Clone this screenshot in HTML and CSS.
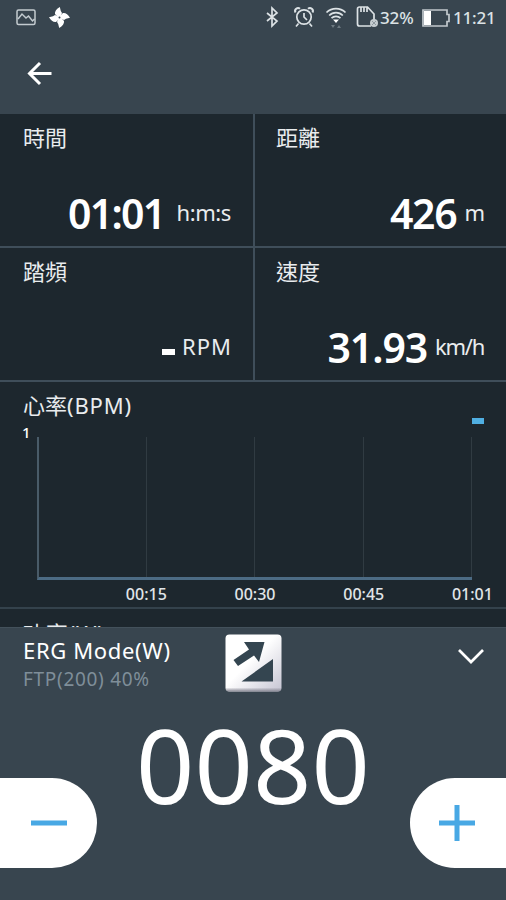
FILE: index.html
```
<!DOCTYPE html>
<html lang="zh-Hant">
<head>
<meta charset="utf-8">
<title>ERG Mode</title>
<link rel="stylesheet" href="styles.css">
</head>
<body>
<main class="screen">
  <header class="statusbar">
    <svg class="notifications" width="56" height="24" viewBox="0 0 56 24">
      <g fill="none" stroke="#c3cbd0" stroke-width="1.500">
        <rect x="1" y="4" width="18" height="14.500" rx="1.500"/>
        <path d="M2 13l4-5 4 4 2.500-2 4 5 2-2"/>
      </g>
      <g fill="#fff" transform="translate(43.500 11.500)">
        <path id="blade" d="M-1.200 0L-4.500-3.500C-5-6-3-8.500 .3-10.500L1.300-6.500L2.500-4.500L1-1Z"/>
        <use href="#blade" transform="rotate(90)"/>
        <use href="#blade" transform="rotate(180)"/>
        <use href="#blade" transform="rotate(270)"/>
        <circle r="1" fill="#38454f"/>
      </g>
    </svg>
    <div class="system">
      <svg width="114" height="26" viewBox="0 0 114 26" fill="none" stroke="#dce2e5" stroke-width="1.700">
        <path d="M2 10l10 8-5 5V5l5 5-10 8"/>
        <g transform="translate(39 14)">
          <circle r="7.200"/><path d="M0-4V0L3 3M-5.500 6.500l-2.500 3M5.500 6.500l2.500 3"/>
          <path d="M-8.500-4.500A3 3 0 0 1-4-8.300M8.500-4.500A3 3 0 0 0 4-8.300" stroke-width="2"/>
        </g>
        <g transform="translate(71 18)">
          <path d="M-9.500-8.500a13.500 13.500 0 0 1 19 0M-6.800-5.500a9.500 9.500 0 0 1 13.600 0M-4.500-2.800a6.300 6.300 0 0 1 9 0"/>
          <path d="M-3-1.500h6L0 2z" fill="#fff" stroke="none"/>
          <path d="M-5 4h4l-2 3zM1 7h4l-2-3z" fill="#6d7981" stroke="none"/>
        </g>
        <path d="M106 23H94.500q-2 0-2-2V6q0-2 2-2h8l6.500 7v6M96 4v5M99 4v5M102 4v5"/>
        <circle cx="109" cy="20" r="4" fill="#c5ccd0" stroke="none"/>
        <path d="M107 18l4 4m0-4l-4 4" stroke="#75818a" stroke-width=".7"/>
      </svg>
      <span class="percent">32%</span>
      <svg class="battery" width="28" height="18" viewBox="0 0 28 18">
        <path d="M1 1h24v4.500h2v7h-2V17H1z" fill="none" stroke="#c1c8cd" stroke-width="1.700"/>
        <path d="M2 2h7v14H2z" fill="#fff"/>
      </svg>
      <span class="clock">11:21</span>
    </div>
  </header>
  <nav class="toolbar">
    <svg width="26" height="26" viewBox="0 0 26 26" fill="none" stroke="#fff" stroke-width="3"><path d="M25.500 12.500H4M14 2L3.500 12.500 14 23"/></svg>
  </nav>
  <section class="metrics">
    <article class="metric"><h2>時間</h2><p><b class="time">01:01</b><span class="hms">h:m:s</span></p></article>
    <article class="metric"><h2>距離</h2><p><b>426</b><span>m</span></p></article>
    <article class="metric"><h2>踏頻</h2><p><i class="dash"></i><span class="rpm">RPM</span></p></article>
    <article class="metric"><h2>速度</h2><p><b class="speed">31.93</b><span class="kmh">km/h</span></p></article>
  </section>
  <section class="heart">
    <div class="heart-head"><h2>心率<span>(BPM)</span></h2><i class="heart-value"></i></div>
    <div class="ymax">1</div>
    <div class="plot"><i></i><i></i><i></i><i></i></div>
    <div class="ticks"><span>00:15</span><span>00:30</span><span>00:45</span><span>01:01</span></div>
  </section>
  <section class="power"><h2>功率(W)</h2></section>
  <section class="sheet">
    <div class="sheet-head">
      <div class="mode"><div class="mode-name">ERG Mode(W)</div><div class="ftp">FTP(200) 40%</div></div>
      <svg class="slope" width="58" height="60" viewBox="0 0 58 60">
        <defs>
          <linearGradient id="face" x1="0" y1="0" x2="1" y2="1"><stop offset=".45" stop-color="#fff"/><stop offset="1" stop-color="#c5c4d2"/></linearGradient>
          <linearGradient id="edge" x1="0" y1="0" x2="0" y2="1"><stop offset=".93" stop-color="#888894" stop-opacity="0"/><stop offset="1" stop-color="#888894"/></linearGradient>
        </defs>
        <rect x="1.500" y="1.500" width="56" height="57" rx="4" fill="url(#face)"/>
        <rect x="1.500" y="1.500" width="56" height="57" rx="4" fill="url(#edge)"/>
        <path d="M20 9h20.500L35 29l-5-6.500-16 10.500-4.500-6L25 16.500zM17.500 48.500l31.500-22.500v22.500z" fill="#344550"/>
      </svg>
      <svg class="chevron" width="28" height="18" viewBox="0 0 28 18" fill="none" stroke="#fff" stroke-width="2.700"><path d="M2 2l12 12L26 2"/></svg>
    </div>
    <div class="watts">0080</div>
    <div class="controls">
      <button class="minus" aria-label="minus"><svg width="38" height="38" viewBox="0 0 38 38" stroke="#48a8e4" stroke-width="5"><path d="M1 19h36"/></svg></button>
      <button class="plus" aria-label="plus"><svg width="38" height="38" viewBox="0 0 38 38" stroke="#48a8e4" stroke-width="5"><path d="M1 19h36M19 1v36"/></svg></button>
    </div>
  </section>
</main>
</body>
</html>
```
FILE: styles.css
```
* { box-sizing: border-box; }
body { margin: 0; font-family: "Noto Sans", "Noto Sans CJK TC", sans-serif; color: #fff; background: #1d272e; }
h2, p { margin: 0; }
.screen { width: 506px; height: 900px; display: flex; flex-direction: column; overflow: hidden; background: #1d272e; }
.statusbar { flex: 0 0 36px; display: flex; justify-content: space-between; padding: 0 10px 0 16px; background: #38454f; }
.notifications { margin-top: 6px; }
.system { display: flex; color: #dce2e5; font-size: 17px; font-weight: 500; line-height: 36px; }
.system > svg:first-child { margin-top: 3px; }
.percent { width: 34px; margin-left: 1px; letter-spacing: -.1px; }
.battery { margin: 9px 3px 0 8px; }
.clock { width: 43px; letter-spacing: -.2px; }
.toolbar { flex: 0 0 78px; padding: 25px 0 0 26px; background: #38454f; }
.metrics { flex: 0 0 268px; display: grid; grid-template-columns: 255px 1fr; grid-template-rows: 134px 134px; }
.metric { display: flex; flex-direction: column; justify-content: space-between; padding: 8px 22px 8px 23px; border-bottom: 2px solid #3f4e5a; }
.metric:nth-child(odd) { border-right: 2px solid #3f4e5a; }
.metric:nth-child(even) { padding-left: 21px; }
h2 { font-size: 22px; line-height: 30px; font-weight: 400; color: #e9ecee; white-space: nowrap; }
.metric p { display: flex; justify-content: flex-end; height: 50px; line-height: 50px; white-space: nowrap; }
.metric b { font-size: 41px; font-weight: 600; letter-spacing: -1.3px; }
.metric .time { letter-spacing: -1.7px; }
.metric .speed { letter-spacing: -1.1px; }
.metric span { margin-left: 8px; font-size: 22px; line-height: 48px; color: #e9ecee; }
.metric b + span { margin-right: -1px; }
.metric .hms { margin-left: 12px; margin-right: 0; letter-spacing: -.4px; }
.metric .kmh { margin-left: 8px; margin-right: 0; letter-spacing: -1.3px; }
.metric .rpm { margin-left: 7px; letter-spacing: 1px; margin-right: -1px; }
.dash { width: 13px; height: 6px; margin-top: 27px; background: #fff; }
.heart { flex: 0 0 227px; display: flex; flex-direction: column; border-bottom: 2px solid #34424c; }
.heart-head { display: flex; justify-content: space-between; height: 42px; padding: 8px 22px 0 23px; }
.heart-head span { letter-spacing: .8px; }
.heart-value { width: 12px; height: 6px; margin-top: 28px; background: #50afe2; }
.ymax { height: 13px; padding-left: 22px; font-size: 15px; line-height: 16px; font-weight: 500; }
.plot { flex: 0 0 143px; width: 435px; margin-left: 37px; display: grid; grid-template-columns: 108px 108px 109px 1fr; border-left: 2px solid #495b68; border-bottom: 3px solid #4c6b84; }
.plot i { border-right: 1px solid #303b42; }
.ticks { flex: 0 0 27px; height: 27px; display: grid; grid-template-columns: repeat(4, 108.700px); grid-template-rows: 27px; margin-left: 92px; font-size: 16px; line-height: 29px; text-align: center; font-weight: 500; color: #e1e5e8; }
.power { flex: 0 0 18px; height: 18px; overflow: hidden; padding: 9px 23px 0; }
.power h2 { letter-spacing: .8px; }
.sheet { flex: 1; border-top: 1px solid #43515b; background: #38454f; }
.sheet-head { display: flex; align-items: flex-start; height: 75px; padding-left: 23px; }
.mode { width: 201px; padding-top: 7px; white-space: nowrap; }
.mode-name { font-size: 22px; line-height: 30px; letter-spacing: .65px; }
.ftp { color: #7f8e99; font-size: 19px; line-height: 28px; letter-spacing: .7px; }
.slope { margin-top: 5px; }
.chevron { margin: 20px 0 0 175px; }
.watts { height: 75px; line-height: 124px; font-size: 102px; text-align: center; letter-spacing: .1px; }
.controls { display: flex; justify-content: space-between; }
button { height: 90px; display: flex; align-items: center; justify-content: center; padding: 0; border: 0; background: #fff; }
.minus { width: 97px; border-radius: 0 45px 45px 0; padding-left: 1px; }
.plus { width: 96px; border-radius: 45px 0 0 45px; padding-right: 2px; }
```
